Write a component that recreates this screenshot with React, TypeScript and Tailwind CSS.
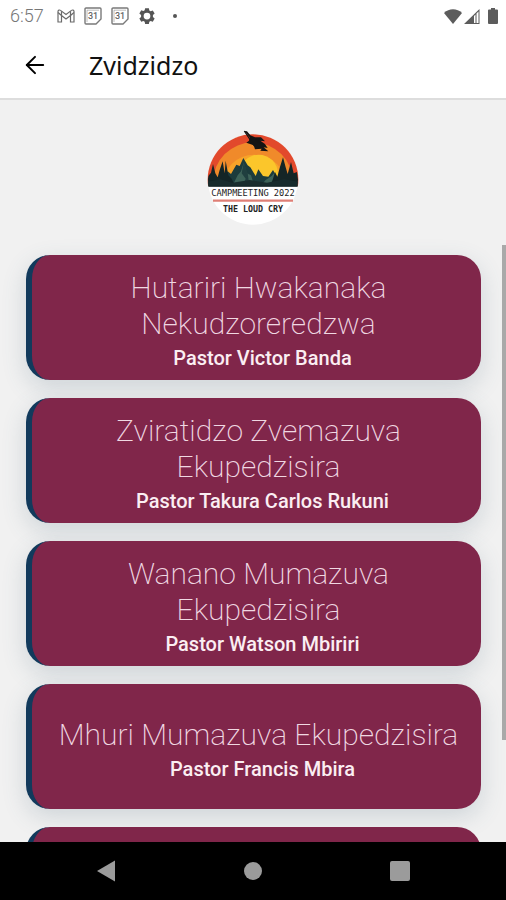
import { ArrowLeft } from "lucide-react";

type Lesson = {
  title: string;
  pastor: string;
};

const lessons: Lesson[] = [
  { title: "Hutariri Hwakanaka Nekudzoreredzwa", pastor: "Pastor Victor Banda" },
  { title: "Zviratidzo Zvemazuva Ekupedzisira", pastor: "Pastor Takura Carlos Rukuni" },
  { title: "Wanano Mumazuva Ekupedzisira", pastor: "Pastor Watson Mbiriri" },
  { title: "Mhuri Mumazuva Ekupedzisira", pastor: "Pastor Francis Mbira" },
];

function CalendarIcon() {
  return (
    <svg viewBox="0 0 18 18" className="size-[18px]" fill="none" stroke="#7a7a7a">
      <path d="M2 1h14a1 1 0 0 1 1 1v10l-5 5H2a1 1 0 0 1-1-1V2a1 1 0 0 1 1-1Z" strokeWidth="1.4" />
      <path d="M3 15V3.200h12" strokeWidth=".5" />
      <text x="9" y="12" textAnchor="middle" fontSize="9" fontWeight="500" fill="#666" stroke="none">
        31
      </text>
    </svg>
  );
}

function StatusBar() {
  return (
    <div className="flex h-8 items-center justify-between pr-2 pl-[10px] text-[#777777]">
      <div className="flex items-center gap-[9px]">
        <span className="mr-1 text-[18px] leading-5 font-light">6:57</span>
        <svg viewBox="0 0 18 14" className="h-[14px] w-[18px]" fill="none" stroke="#6b6b6b" strokeWidth="1.200">
          <path d="M1 13V2.500C1 1 2.500.6 3.500 1.400L9 5.600l5.500-4.200C15.500.6 17 1 17 2.500V13h-3.500V6.500L9 10 4.500 6.500V13Z" />
          <path d="M1 3.500l3.500 3M17 3.500l-3.500 3M4.500 2.200v4.300M13.500 2.200v4.300" />
        </svg>
        <CalendarIcon />
        <CalendarIcon />
        <svg viewBox="0 0 24 24" className="size-[18px]" fill="#555">
          <path
            fillRule="evenodd"
            d="M9.500 1.500h5l.6 3 1.700 1 2.900-1 2.500 4.300-2.300 2v2.400l2.300 2-2.500 4.300-2.900-1-1.700 1-.6 3h-5l-.6-3-1.700-1-2.900 1-2.500-4.300 2.300-2v-2.400l-2.300-2 2.500-4.300 2.900 1 1.700-1ZM12 7.500a4.500 4.500 0 1 0 0 9 4.500 4.500 0 0 0 0-9Z"
          />
        </svg>
        <span className="ml-2 size-1 rounded-full bg-[#555]" />
      </div>
      <div className="flex items-center">
        <svg viewBox="0 0 18 15" className="h-[15px] w-[18px]" fill="#5c5c5c">
          <path d="M0 4C5-1 13-1 18 4L9 15Z" />
        </svg>
        <svg viewBox="0 0 16 15" className="ml-[2px] h-[15px] w-4" fill="#5c5c5c">
          <path fillRule="evenodd" d="M0 15 15.500 0V15ZM10 7V14h1.500V5.500ZM12.500 4.500V14h2V2.500Z" />
        </svg>
        <svg viewBox="0 0 10 16" className="ml-2 h-4 w-[10px]" fill="#5c5c5c">
          <path d="M3 0h4v1.500h2a1 1 0 0 1 1 1v12.500a1 1 0 0 1-1 1H1a1 1 0 0 1-1-1V2.500a1 1 0 0 1 1-1h2Z" />
        </svg>
      </div>
    </div>
  );
}

function Logo() {
  return (
    <svg viewBox="0 0 276 288" className="mx-auto h-24 w-[92px]" role="img" aria-label="Campmeeting 2022, The Loud Cry">
      <defs>
        <clipPath id="badge">
          <circle cx="138" cy="149" r="135" />
        </clipPath>
        <clipPath id="sky">
          <rect width="276" height="168" />
        </clipPath>
      </defs>
      <circle cx="138" cy="149" r="135" fill="#fff" />
      <g clipPath="url(#sky)">
        <circle cx="138" cy="149" r="136" fill="#e2492c" />
        <circle cx="138" cy="157" r="120" fill="#f08a2a" />
        <circle cx="142" cy="170" r="96" fill="#f7a329" />
        <circle cx="155" cy="132" r="58" fill="#fbc62b" />
      </g>
      <g clipPath="url(#badge)">
        <path d="M38 168 62 124 72 132 88 104 98 108 109 84 122 106 130 112 146 138 154 118 168 138 184 140 198 120 212 144 240 168Z" fill="#1c3b3c" />
        <path d="M76 168 92 136 102 124 110 98 120 130 132 136 142 168ZM160 168 176 150 194 138 202 128 210 154 222 168Z" fill="#3d6258" />
        <path d="M110 98 104 130 116 146 108 168 126 160 122 128Z" fill="#203f3f" />
        <path d="M0 168 4 138 12 128 18 102 25 130 32 142 38 120 47 94 53 130 56 92 64 136 74 146 84 168ZM190 168 198 146 204 126 211 140 218 114 228 82 236 112 242 132 252 96 260 130 270 126 276 168Z" fill="#142526" />
        <path d="M0 168V156L40 148 76 158 128 150 180 158 232 148 276 156V168Z" fill="#182c2d" />
      </g>
      <path d="M112 3 120 4 130 16 144 22 162 22 174 34 160 32 174 42 182 54 170 52 184 64 160 62 164 56 144 58 140 46 118 38 126 32 128 22Z" fill="#141414" />
      <path d="M112 3 130 30 142 48M146 30 172 48" fill="none" stroke="#141414" strokeWidth="4" />
      <path d="M4 169H272" stroke="#142526" strokeWidth="3" />
      <g fill="#222" fontFamily="'DejaVu Sans Mono', monospace" textAnchor="middle">
        <text x="138" y="197" fontSize="26">CAMPMEETING 2022</text>
        <text x="138" y="246" fontSize="25" fontWeight="700">THE LOUD CRY</text>
      </g>
      <path d="M18 212H258" stroke="#df7f76" strokeWidth="7" />
    </svg>
  );
}

function LessonCard({ title, pastor }: Lesson) {
  return (
    <li>
      <button
        type="button"
        className="flex min-h-[125px] w-full flex-col items-center justify-center rounded-3xl border-l-6 border-[#123a5c] bg-[#80264a] pt-2 pr-3 pl-4 text-center shadow-[0_8px_24px_rgba(70,100,120,0.2)]"
      >
        <span className="text-[30px] leading-9 font-extralight text-[#f0d8e2]">{title}</span>
        <span className="pl-2 text-[20px] leading-8 font-medium text-[#fbeef2]">{pastor}</span>
      </button>
    </li>
  );
}

export default function App() {
  return (
    <div className="flex h-screen flex-col bg-[#f1f1f1] font-['Roboto',sans-serif]">
      <header className="border-b-2 border-[#dddddd] bg-white">
        <StatusBar />
        <div className="flex h-[66px] items-center gap-10 px-[21px]">
          <button type="button" aria-label="Back">
            <ArrowLeft className="size-7 text-black" strokeWidth={1.7} />
          </button>
          <h1 className="font-['Noto_Sans',sans-serif] text-[25px] leading-8 text-[#111111]">Zvidzidzo</h1>
        </div>
      </header>

      <main className="relative min-h-0 flex-1 overflow-hidden">
        <div className="pt-[30px]">
          <Logo />
        </div>
        <ul className="mt-[29px] flex flex-col gap-[18px] pr-[25px] pl-[26px]">
          {lessons.map((lesson) => (
            <LessonCard key={lesson.title} {...lesson} />
          ))}
          <li className="min-h-[125px] rounded-3xl border-l-6 border-[#123a5c] bg-[#80264a]" />
        </ul>
        <div className="absolute top-[145px] right-0 h-2/3 w-1 bg-[#a9a9a9]" />
      </main>

      <nav className="flex h-[58px] items-center justify-around bg-black px-8">
        <button type="button" aria-label="Back">
          <svg viewBox="0 0 20 22" className="h-[22px] w-5" fill="#9b9b9b">
            <path d="M19 0.500V21.500L1 11Z" />
          </svg>
        </button>
        <button type="button" aria-label="Home" className="size-[18px] rounded-full bg-[#9b9b9b]" />
        <button type="button" aria-label="Recent apps" className="size-5 rounded-xs bg-[#9b9b9b]" />
      </nav>
    </div>
  );
}
